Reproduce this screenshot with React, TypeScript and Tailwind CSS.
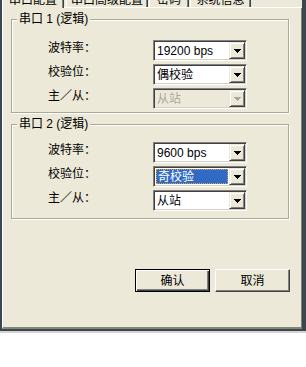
import React from "react";

type ComboState = "normal" | "focus" | "disabled";

function Arrow({ disabled }: { disabled?: boolean }) {
  return (
    <svg width="7" height="4" viewBox="0 0 7 4" shapeRendering="crispEdges">
      <path
        d="M0 0h7v1H0zM1 1h5v1H1zM2 2h3v1H2zM3 3h1v1H3z"
        fill={disabled ? "#aca899" : "#000"}
      />
    </svg>
  );
}

function Combo({ value, state = "normal" }: { value: string; state?: ComboState }) {
  const disabled = state === "disabled";
  return (
    <div className="flex h-[21px] w-[94px] border border-t-[#808080] border-l-[#808080] border-r-white border-b-white p-px shadow-[inset_1px_1px_0_#404040,inset_-1px_-1px_0_#d4d0c8]">
      <div
        className={`flex flex-1 items-center ${
          disabled ? "bg-[#ece9d8] text-[#aca899]" : "bg-white text-black"
        }`}
      >
        {state === "focus" ? (
          <span className="mx-px flex h-[15px] flex-1 items-center border border-dotted border-[#d9a441] bg-[#316ac5] pl-px leading-[12px] text-white">
            {value}
          </span>
        ) : (
          <span className="pl-[2px] leading-[12px]">{value}</span>
        )}
      </div>
      <div className="flex w-[16px] items-center justify-center border border-t-[#ece9d8] border-l-[#ece9d8] border-r-[#404040] border-b-[#404040] bg-[#ece9d8] shadow-[inset_1px_1px_0_#fff,inset_-1px_-1px_0_#808080]">
        <Arrow disabled={disabled} />
      </div>
    </div>
  );
}

function Row({ label, children }: { label: string; children: React.ReactNode }) {
  return (
    <div className="flex h-[21px] items-start">
      <span className="w-[105px] pt-[2px] leading-[12px]">{label}</span>
      {children}
    </div>
  );
}

function Group({
  title,
  className,
  children,
}: {
  title: string;
  className: string;
  children: React.ReactNode;
}) {
  return (
    <div
      className={`relative ml-[8px] w-[278px] border border-[#aca899] shadow-[inset_1px_1px_0_#fff,1px_1px_0_#fff] ${className}`}
    >
      <span className="absolute -top-[7px] left-[5px] bg-[#ece9d8] px-[2px] leading-[12px]">
        {title}
      </span>
      <div className="flex flex-col gap-[3px] pl-[36px]">{children}</div>
    </div>
  );
}

function Tab({
  label,
  width,
  selected,
  className = "",
}: {
  label: string;
  width: string;
  selected?: boolean;
  className?: string;
}) {
  return (
    <div
      className={`flex justify-center border-l border-r border-l-white border-r-[#404040] bg-[#ece9d8] shadow-[inset_-1px_0_0_#808080] ${
        selected ? "relative h-[8px]" : "h-[7px]"
      } ${width} ${className}`}
    >
      <span className="-mt-[6px] whitespace-nowrap leading-[12px]">{label}</span>
    </div>
  );
}

export default function App() {
  return (
    <div className="h-[367px] w-[306px] overflow-hidden bg-white text-[12px] text-black font-['Liberation_Sans','Noto_Sans_CJK_SC',sans-serif]">
      <div className="flex h-[331px] flex-col bg-[#3a4650] pb-[2px] pl-[2px] pr-[4px]">
        <div className="flex h-[8px] shrink-0 border-b border-white bg-[#ece9d8]">
          <Tab label="串口配置" width="w-[62px]" selected />
          <Tab label="串口高级配置" width="w-[82px]" className="ml-[2px]" />
          <Tab label="密码" width="w-[40px]" className="ml-px" />
          <Tab label="系统信息" width="w-[61px]" className="ml-px" />
        </div>
        <div className="flex flex-1 flex-col border-b-2 border-l border-r border-b-[#85857a] border-l-white border-r-[#808080] bg-[#ece9d8]">
          <Group title="串口 1 (逻辑)" className="mt-[11px] h-[94px] pt-[20px]">
            <Row label="波特率：">
              <Combo value="19200 bps" />
            </Row>
            <Row label="校验位：">
              <Combo value="偶校验" />
            </Row>
            <Row label="主／从：">
              <Combo value="从站" state="disabled" />
            </Row>
          </Group>
          <Group title="串口 2 (逻辑)" className="mt-[11px] h-[95px] pt-[17px]">
            <Row label="波特率：">
              <Combo value="9600 bps" />
            </Row>
            <Row label="校验位：">
              <Combo value="奇校验" state="focus" />
            </Row>
            <Row label="主／从：">
              <Combo value="从站" />
            </Row>
          </Group>
          <div className="mt-[50px] flex justify-end gap-[5px] pr-[11px]">
            <button className="h-[23px] w-[75px] border border-black bg-[#ece9d8] leading-[12px] shadow-[inset_1px_1px_0_#fff,inset_-1px_-1px_0_#404040,inset_-2px_-2px_0_#808080]">
              确认
            </button>
            <button className="h-[23px] w-[75px] border border-t-white border-l-white border-r-[#404040] border-b-[#404040] bg-[#ece9d8] leading-[12px] shadow-[inset_-1px_-1px_0_#808080]">
              取消
            </button>
          </div>
        </div>
      </div>
      <div className="h-[2px] bg-[#d6d3ce]" />
    </div>
  );
}
